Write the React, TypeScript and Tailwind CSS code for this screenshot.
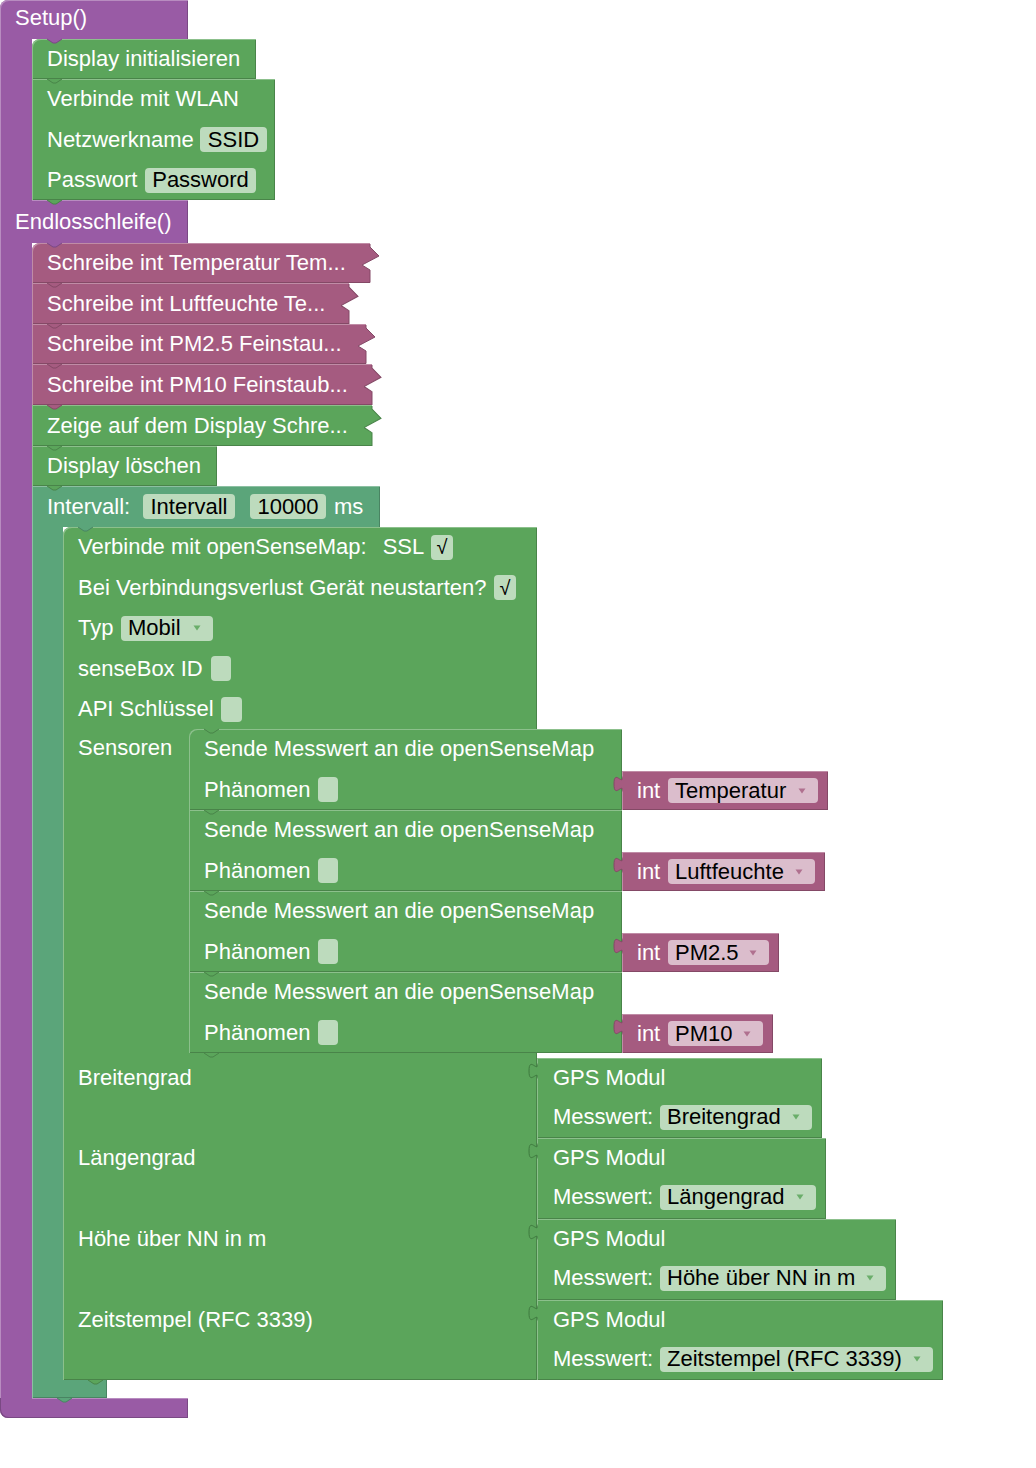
import React from "react";

const G = "#5ba55b";
const GD = "#498449";
const P = "#a55b80";
const PD = "#844966";
const V = "#995ba5";
const VD = "#7a4984";
const T = "#5ba57a";
const TD = "#498462";

const green =
  "bg-[#5ba55b] shadow-[inset_1px_1px_0_#8cc08c,inset_-1px_-1px_0_#498449]";
const pinkVal =
  "bg-[#a55b80] shadow-[inset_1px_1px_0_#c08ca6,inset_-1px_-1px_0_#844966]";

function Tab({ fill, stroke, className }: { fill: string; stroke: string; className: string }) {
  return (
    <svg
      width="17"
      height="6"
      viewBox="0 0 17 6"
      className={`pointer-events-none absolute -bottom-[5px] z-10 ${className}`}
    >
      <path d="M1 1 L7 5 L10 5 L16 1 Z" fill={fill} />
      <path d="M1 1 L7 5 L10 5 L16 1" fill="none" stroke={stroke} strokeWidth="1" />
    </svg>
  );
}

function OutTab({ fill, stroke }: { fill: string; stroke: string }) {
  return (
    <svg
      width="11"
      height="17"
      viewBox="0 0 11 17"
      className="pointer-events-none absolute -left-[10px] top-[5px] z-10"
    >
      <path d="M11 0.5 C11 10.5 2 -7.5 2 8 S11 5.5 11 15.5 Z" fill={fill} />
      <path d="M11 0.5 C11 10.5 2 -7.5 2 8 S11 5.5 11 15.5" fill="none" stroke={stroke} strokeWidth="1" />
    </svg>
  );
}

function Arrow({ fill }: { fill: string }) {
  return (
    <svg width="8" height="6" viewBox="0 0 8 6" className="shrink-0">
      <path d="M0.5 0.5 L7.5 0.5 L4 5.5 Z" fill={fill} />
    </svg>
  );
}

function TextField({ children, className = "" }: { children?: React.ReactNode; className?: string }) {
  return (
    <span
      className={`flex h-[25px] shrink-0 items-center justify-center rounded-[4px] bg-[#bddbbd] text-black ${className}`}
    >
      {children}
    </span>
  );
}

function Dropdown({
  children,
  pink = false,
  className = "",
}: {
  children: React.ReactNode;
  pink?: boolean;
  className?: string;
}) {
  return (
    <span
      className={`flex h-[25px] shrink-0 items-center justify-between rounded-[4px] pl-[7px] pr-[12px] text-black ${
        pink ? "bg-[#dbbdcc]" : "bg-[#bddbbd]"
      } ${className}`}
    >
      <span className="whitespace-nowrap">{children}</span>
      <Arrow fill={pink ? "#b0708f" : "#6aae6a"} />
    </span>
  );
}

function Check({ className = "" }: { className?: string }) {
  return (
    <span
      className={`flex h-[25px] w-[22px] shrink-0 items-center justify-center rounded-[4px] bg-[#bddbbd] font-['DejaVu_Sans',sans-serif] text-[20px] font-light text-black ${className}`}
    >
      √
    </span>
  );
}

function Collapsed({
  text,
  body,
  h,
  isGreen = false,
  first = false,
}: {
  text: string;
  body: string;
  h: string;
  isGreen?: boolean;
  first?: boolean;
}) {
  const fill = isGreen ? G : P;
  const stroke = isGreen ? GD : PD;
  const light = isGreen ? "#8cc08c" : "#c08ca6";
  return (
    <div className={`relative flex ${h}`}>
      <div
        className={`flex shrink-0 items-center whitespace-nowrap pl-[15px] ${body} ${
          first ? "rounded-tl-[8px]" : ""
        } ${
          isGreen
            ? "bg-[#5ba55b] shadow-[inset_1px_1px_0_#8cc08c,inset_0_-1px_0_#498449]"
            : "bg-[#a55b80] shadow-[inset_1px_1px_0_#c08ca6,inset_0_-1px_0_#844966]"
        }`}
      >
        {text}
      </div>
      <svg
        viewBox="0 0 18 40"
        preserveAspectRatio="none"
        className="h-full w-[18px] shrink-0"
      >
        <polygon points="0,0 8,0 8,4 17,13 0,22 8,27 8,40 0,40" fill={fill} />
        <polyline points="0,0.5 8,0.5" fill="none" stroke={light} strokeWidth="1" />
        <polyline
          points="8,1 8,4 17,13 0,22 8,27 8,39.5 0,39.5"
          fill="none"
          stroke={stroke}
          strokeWidth="1"
        />
      </svg>
      <Tab fill={fill} stroke={stroke} className="left-[14px]" />
    </div>
  );
}

function Sende({
  value,
  valW,
  fieldW,
  first = false,
}: {
  value: string;
  valW: string;
  fieldW: string;
  first?: boolean;
}) {
  return (
    <div className="flex items-end">
      <div
        className={`relative flex h-[81px] w-[433px] shrink-0 flex-col ${green} ${
          first ? "rounded-tl-[8px]" : ""
        }`}
      >
        <div className="flex h-[40px] items-center whitespace-nowrap pl-[15px]">
          Sende Messwert an die openSenseMap
        </div>
        <div className="flex h-[41px] items-center whitespace-nowrap pl-[15px]">
          <span className="w-[114px] shrink-0">Phänomen</span>
          <TextField className="w-[20px]" />
        </div>
        <Tab fill={G} stroke={GD} className="left-[14px]" />
      </div>
      <div className={`relative flex h-[39px] shrink-0 items-center pl-[15px] ${pinkVal} ${valW}`}>
        <OutTab fill={P} stroke={PD} />
        <span className="w-[31px] shrink-0">int</span>
        <Dropdown pink className={fieldW}>
          {value}
        </Dropdown>
      </div>
    </div>
  );
}

function GpsRow({
  label,
  value,
  h,
  w,
  fieldW,
}: {
  label: string;
  value: string;
  h: string;
  w: string;
  fieldW: string;
}) {
  return (
    <div className={`flex ${h}`}>
      <div className="w-[474px] shrink-0">
        <div className="flex h-[39px] items-center whitespace-nowrap pl-[15px]">{label}</div>
      </div>
      <div className={`relative flex shrink-0 flex-col ${green} ${w}`}>
        <OutTab fill={G} stroke="#3f7a3f" />
        <div className="flex h-[39px] items-center whitespace-nowrap pl-[16px]">GPS Modul</div>
        <div className="flex h-[40px] items-center whitespace-nowrap pl-[16px]">
          <span className="w-[107px] shrink-0">Messwert:</span>
          <Dropdown className={fieldW}>{value}</Dropdown>
        </div>
      </div>
    </div>
  );
}

function OpenSenseMap() {
  return (
    <div className={`relative w-[474px] shrink-0 rounded-tl-[8px] ${green}`}>
      <div className="flex h-[40px] items-center whitespace-nowrap pl-[15px]">
        <span className="w-[353px] shrink-0">
          Verbinde mit openSenseMap:<span className="ml-[16px]">SSL</span>
        </span>
        <Check />
      </div>
      <div className="flex h-[41px] items-center whitespace-nowrap pl-[15px]">
        <span className="w-[416px] shrink-0">Bei Verbindungsverlust Gerät neustarten?</span>
        <Check />
      </div>
      <div className="flex h-[40px] items-center whitespace-nowrap pl-[15px]">
        <span className="w-[43px] shrink-0">Typ</span>
        <Dropdown className="w-[92px]">Mobil</Dropdown>
      </div>
      <div className="flex h-[41px] items-center whitespace-nowrap pl-[15px]">
        <span className="w-[133px] shrink-0">senseBox ID</span>
        <TextField className="w-[20px]" />
      </div>
      <div className="relative flex h-[40px] items-center whitespace-nowrap pl-[15px]">
        <span className="w-[143px] shrink-0">API Schlüssel</span>
        <TextField className="w-[21px]" />
        <Tab fill={G} stroke={GD} className="left-[140px]" />
      </div>
      <div className="flex">
        <div className="w-[126px] shrink-0">
          <div className="flex h-[38px] items-center pl-[15px]">Sensoren</div>
        </div>
        <div className="flex flex-col">
          <Sende value="Temperatur" valW="w-[206px]" fieldW="w-[150px]" first />
          <Sende value="Luftfeuchte" valW="w-[203px]" fieldW="w-[147px]" />
          <Sende value="PM2.5" valW="w-[157px]" fieldW="w-[101px]" />
          <Sende value="PM10" valW="w-[151px]" fieldW="w-[95px]" />
        </div>
      </div>
      <div className="h-[5px]" />
      <GpsRow label="Breitengrad" value="Breitengrad" h="h-[80px]" w="w-[285px]" fieldW="w-[152px]" />
      <GpsRow label="Längengrad" value="Längengrad" h="h-[81px]" w="w-[289px]" fieldW="w-[156px]" />
      <GpsRow label="Höhe über NN in m" value="Höhe über NN in m" h="h-[81px]" w="w-[359px]" fieldW="w-[226px]" />
      <GpsRow
        label="Zeitstempel (RFC 3339)"
        value="Zeitstempel (RFC 3339)"
        h="h-[80px]"
        w="w-[406px]"
        fieldW="w-[273px]"
      />
      <Tab fill={G} stroke={GD} className="left-[24px]" />
    </div>
  );
}

export default function App() {
  return (
    <div className="relative min-h-[1468px] w-[1036px] overflow-hidden bg-white font-['Liberation_Sans',Arial,sans-serif] text-[22px] leading-none text-white">
      <div className="flex w-fit flex-col">
        {/* Setup header */}
        <div className="relative flex h-[39px] w-[188px] items-center rounded-tl-[8px] bg-[#995ba5] pb-[3px] pl-[15px] shadow-[inset_1px_1px_0_#b88cc0,inset_-1px_0_0_#7a4984]">
          Setup()
          <Tab fill={V} stroke={VD} className="left-[46px]" />
        </div>
        <div className="flex">
          <div className="w-[32px] shrink-0 bg-[#995ba5] shadow-[inset_1px_0_0_#b88cc0]" />
          <div className="flex flex-col">
            <div className={`relative flex h-[40px] w-[224px] items-center whitespace-nowrap rounded-tl-[8px] pl-[15px] ${green}`}>
              Display initialisieren
              <Tab fill={G} stroke={GD} className="left-[14px]" />
            </div>
            <div className={`relative flex w-[243px] flex-col ${green}`}>
              <div className="flex h-[40px] items-center whitespace-nowrap pl-[15px]">Verbinde mit WLAN</div>
              <div className="flex h-[41px] items-center whitespace-nowrap pl-[15px]">
                <span className="w-[153px] shrink-0">Netzwerkname</span>
                <TextField className="w-[67px]">SSID</TextField>
              </div>
              <div className="flex h-[40px] items-center whitespace-nowrap pl-[15px]">
                <span className="w-[98px] shrink-0">Passwort</span>
                <TextField className="w-[111px]">Password</TextField>
              </div>
              <Tab fill={G} stroke={GD} className="left-[14px]" />
            </div>
          </div>
        </div>

        {/* Loop header */}
        <div className="relative flex h-[43px] w-[188px] items-center bg-[#995ba5] pl-[15px] shadow-[inset_1px_0_0_#b88cc0,inset_-1px_0_0_#7a4984]">
          <div className="absolute left-[32px] right-0 top-0 h-px bg-[#b88cc0]" />
          Endlosschleife()
          <Tab fill={V} stroke={VD} className="left-[46px]" />
        </div>
        <div className="flex">
          <div className="w-[32px] shrink-0 bg-[#995ba5] shadow-[inset_1px_0_0_#b88cc0]" />
          <div className="flex flex-col">
            <Collapsed text="Schreibe int Temperatur Tem..." body="w-[330px]" h="h-[40px]" first />
            <Collapsed text="Schreibe int Luftfeuchte Te..." body="w-[309px]" h="h-[41px]" />
            <Collapsed text="Schreibe int PM2.5 Feinstau..." body="w-[326px]" h="h-[40px]" />
            <Collapsed text="Schreibe int PM10 Feinstaub..." body="w-[332px]" h="h-[41px]" />
            <Collapsed text="Zeige auf dem Display Schre..." body="w-[332px]" h="h-[41px]" isGreen />
            <div className={`relative flex h-[40px] w-[185px] items-center whitespace-nowrap pl-[15px] ${green}`}>
              Display löschen
              <Tab fill={G} stroke={GD} className="left-[14px]" />
            </div>

            {/* Intervall block */}
            <div className="flex flex-col">
              <div className="relative flex h-[41px] w-[348px] items-center whitespace-nowrap bg-[#5ba57a] pl-[15px] shadow-[inset_1px_1px_0_#8cc0a2,inset_-1px_0_0_#498462]">
                <span className="w-[96px] shrink-0">Intervall:</span>
                <TextField className="w-[92px]">Intervall</TextField>
                <TextField className="ml-[15px] w-[76px]">10000</TextField>
                <span className="ml-[8px]">ms</span>
                <Tab fill={T} stroke={TD} className="left-[45px]" />
              </div>
              <div className="flex">
                <div className="w-[31px] shrink-0 bg-[#5ba57a] shadow-[inset_1px_0_0_#8cc0a2]" />
                <OpenSenseMap />
              </div>
              <div className="relative h-[18px] w-[75px] bg-[#5ba57a] shadow-[inset_1px_0_0_#8cc0a2,inset_-1px_-1px_0_#498462]">
                <Tab fill={T} stroke={TD} className="left-[24px]" />
              </div>
            </div>
          </div>
        </div>

        {/* Bottom arm */}
        <div className="flex h-[20px] w-[188px]">
          <div className="w-[32px] shrink-0 rounded-bl-[8px] bg-[#995ba5] shadow-[inset_1px_-1px_0_#7a4984]" />
          <div className="flex-1 bg-[#995ba5] shadow-[inset_0_1px_0_#b88cc0,inset_-1px_-1px_0_#7a4984]" />
        </div>
      </div>
    </div>
  );
}
